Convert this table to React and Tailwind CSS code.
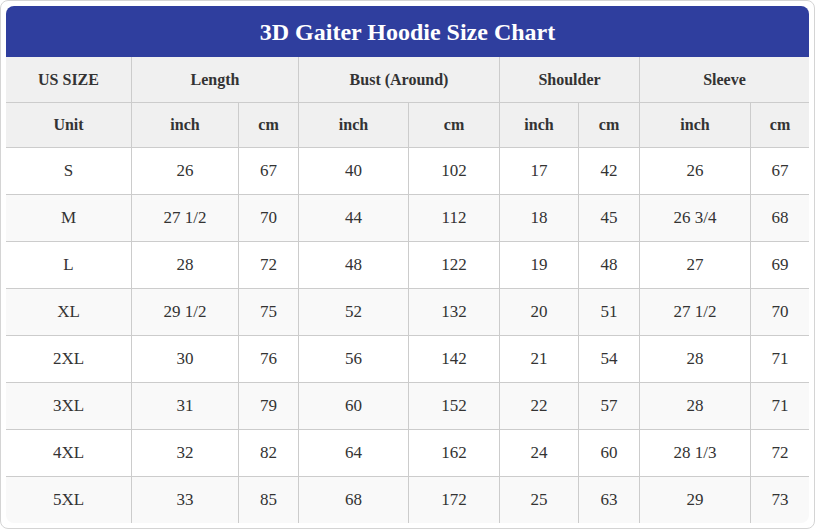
import React from "react";

const rows = [
  ["S", "26", "67", "40", "102", "17", "42", "26", "67"],
  ["M", "27 1/2", "70", "44", "112", "18", "45", "26 3/4", "68"],
  ["L", "28", "72", "48", "122", "19", "48", "27", "69"],
  ["XL", "29 1/2", "75", "52", "132", "20", "51", "27 1/2", "70"],
  ["2XL", "30", "76", "56", "142", "21", "54", "28", "71"],
  ["3XL", "31", "79", "60", "152", "22", "57", "28", "71"],
  ["4XL", "32", "82", "64", "162", "24", "60", "28 1/3", "72"],
  ["5XL", "33", "85", "68", "172", "25", "63", "29", "73"],
];

const cols = "grid grid-cols-[126px_107px_60px_110px_91px_79px_61px_111px_58px]";

function cellCls(ci, last, extra) {
  return (
    "flex items-center justify-center border-[#cccccc] " +
    (ci === 8 ? "" : "border-r ") +
    (last ? "" : "border-b ") +
    extra
  );
}

export default function App() {
  return (
    <div className="w-[815px] h-[529px] bg-white border border-[#d4d4d4] rounded-[8px] p-[5px] text-[#333] font-['Liberation_Serif','Times_New_Roman',serif]">
      <div className="w-[803px] h-[517px] rounded-[8px] overflow-hidden">
        <div className="h-[51px] bg-[#2f3e9e] text-white flex items-center justify-center text-[24px] font-bold">
          3D Gaiter Hoodie Size Chart
        </div>
        <div className={`${cols} bg-[#f0f0f0] font-bold text-[16px]`}>
          <div className="h-[46px] flex items-center justify-center border-r border-b border-[#cccccc]">US SIZE</div>
          <div className="col-span-2 h-[46px] flex items-center justify-center border-r border-b border-[#cccccc]">Length</div>
          <div className="col-span-2 h-[46px] flex items-center justify-center border-r border-b border-[#cccccc]">Bust (Around)</div>
          <div className="col-span-2 h-[46px] flex items-center justify-center border-r border-b border-[#cccccc]">Shoulder</div>
          <div className="col-span-2 h-[46px] flex items-center justify-center border-b border-[#cccccc]">Sleeve</div>
          {["Unit", "inch", "cm", "inch", "cm", "inch", "cm", "inch", "cm"].map((t, i) => (
            <div key={i} className={cellCls(i, false, "h-[45px]")}>
              {t}
            </div>
          ))}
        </div>
        {rows.map((r, ri) => {
          const last = ri === rows.length - 1;
          return (
            <div key={ri} className={`${cols} text-[17px] ${ri % 2 === 1 ? "bg-[#f9f9f9]" : "bg-white"}`}>
              {r.map((c, ci) => (
                <div key={ci} className={cellCls(ci, last, last ? "h-[46px]" : "h-[47px]")}>
                  {c}
                </div>
              ))}
            </div>
          );
        })}
      </div>
    </div>
  );
}
